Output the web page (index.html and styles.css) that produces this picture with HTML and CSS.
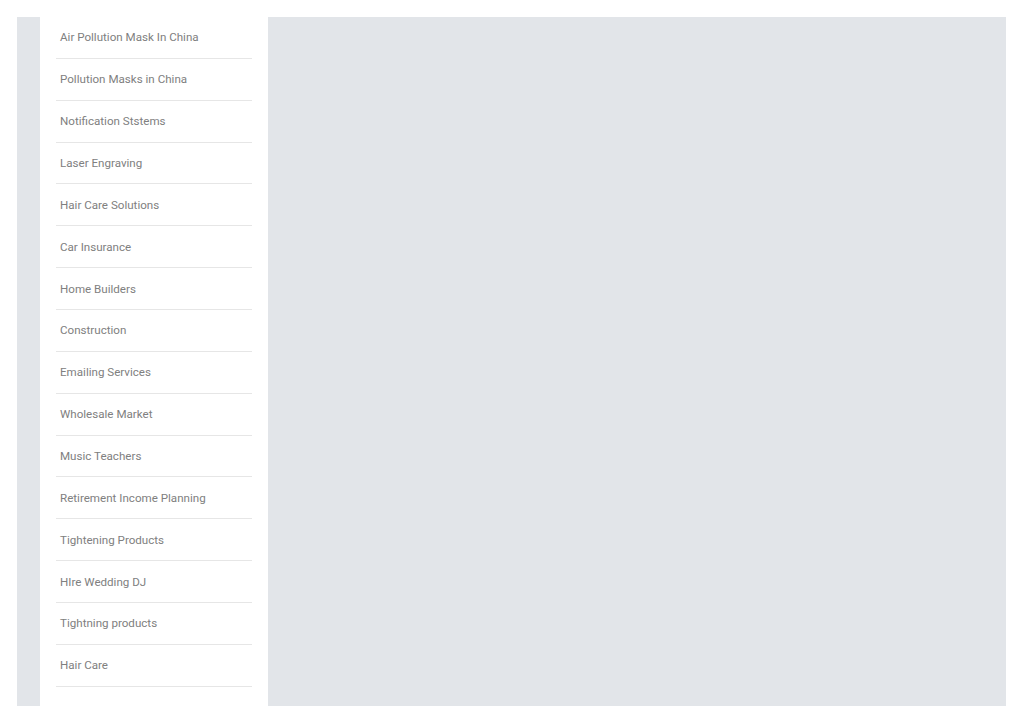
FILE: index.html
```html
<!DOCTYPE html>
<html lang="en">
<head>
    <meta charset="UTF-8">
    <title>Categories</title>
    <link rel="stylesheet" href="styles.css">
</head>
<body>
    <div class="layout">
        <aside class="sidebar">
            <ul class="menu">
                <li>Air Pollution Mask In China</li>
                <li>Pollution Masks in China</li>
                <li>Notification Ststems</li>
                <li>Laser Engraving</li>
                <li>Hair Care Solutions</li>
                <li>Car Insurance</li>
                <li>Home Builders</li>
                <li>Construction</li>
                <li>Emailing Services</li>
                <li>Wholesale Market</li>
                <li>Music Teachers</li>
                <li>Retirement Income Planning</li>
                <li>Tightening Products</li>
                <li>HIre Wedding DJ</li>
                <li>Tightning products</li>
                <li>Hair Care</li>
            </ul>
        </aside>
        <main class="content"></main>
    </div>
</body>
</html>
```

FILE: styles.css
```css
body {
    margin: 0;
    padding: 17px 18px 17px 17px;
    font-family: Roboto, "Liberation Sans", sans-serif;
    background-color: #fff;
}
.layout {
    display: flex;
    background-color: #e2e5e9;
    padding-left: 23px;
}
.sidebar {
    width: 196px;
    background-color: #fff;
    padding: 0 16px 19px;
}
.menu {
    list-style: none;
    margin: 0;
    padding: 0;
}
.menu li {
    font-size: 11.6px;
    line-height: 14.87px;
    padding: 13.4px 4px 12.6px;
    color: #808080;
    border-bottom: 1px solid #e6e6e6;
}
.content {
    flex: 1;
}
```
